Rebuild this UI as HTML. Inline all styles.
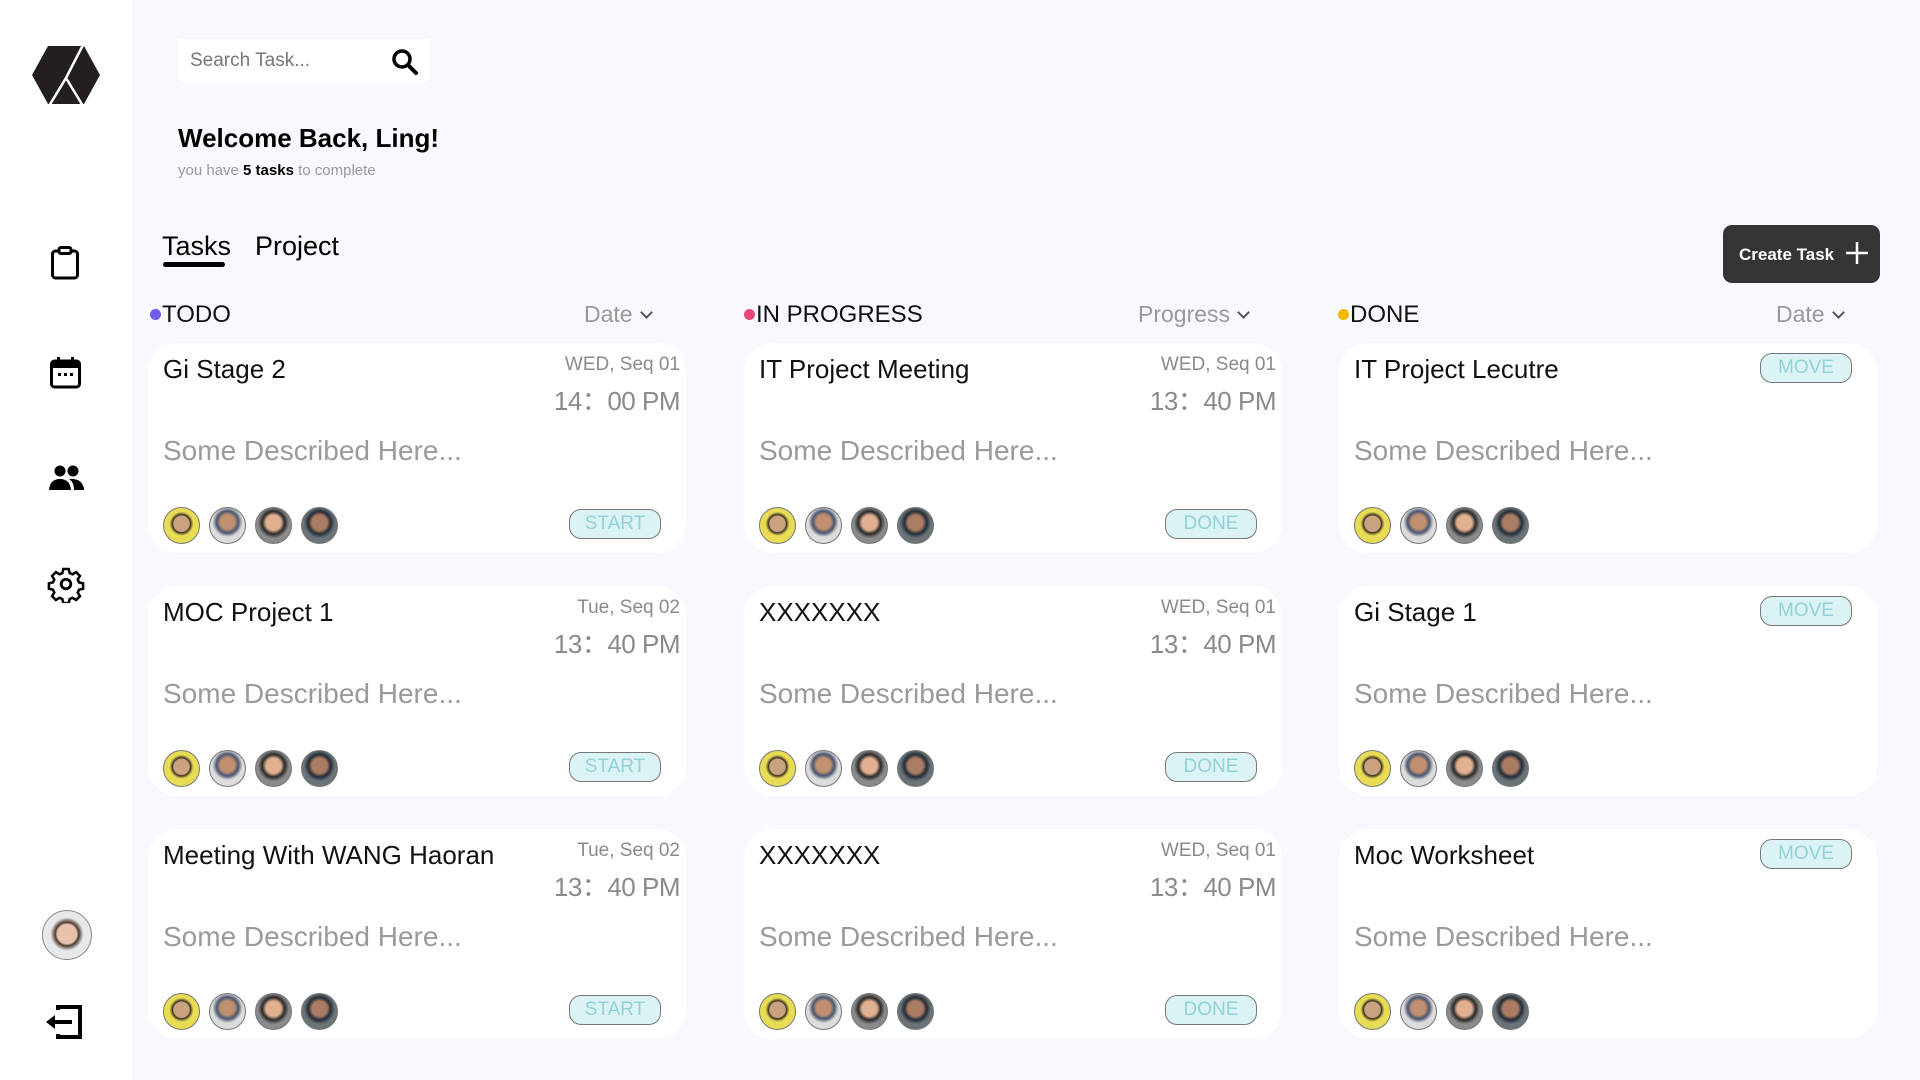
<!DOCTYPE html>
<html><head><meta charset="utf-8"><style>
*{margin:0;padding:0;box-sizing:border-box}
body{width:1920px;height:1080px;background:#f8f9fe;font-family:"Liberation Sans",sans-serif;position:relative;overflow:hidden}
.side{position:absolute;left:0;top:0;width:132px;height:1080px;background:#fff}
.a{position:absolute}
.card{position:absolute;width:538px;height:210px;background:#fff;border-radius:30px}
.t{position:absolute;left:15px;top:11px;font-size:26px;color:#111;white-space:nowrap}
.d{position:absolute;right:6px;top:11px;font-size:19px;color:#8a8a8a}
.tm{position:absolute;right:6px;top:38px;font-size:26px;color:#8a8a8a;letter-spacing:-0.5px}
.ds{position:absolute;left:15px;top:92px;font-size:28px;color:#9a9a9a}
.av{position:absolute;top:164px;width:37px;height:37px;border-radius:50%;border:1px solid #777}
.b{position:absolute;left:421px;width:92px;height:30px;border:1.5px solid #777;border-radius:12px;background:#dcf3f6;color:#8fd3d8;font-size:19px;text-align:center;line-height:28px}
.hd{position:absolute;top:301px;font-size:24px;color:#111}
.dot{display:inline-block;width:11px;height:11px;border-radius:50%;margin-right:1px;vertical-align:2px}
.sort{position:absolute;top:301px;font-size:23px;color:#999}
.sort:after{content:"";display:inline-block;width:7px;height:7px;border-right:2px solid #555;border-bottom:2px solid #555;transform:rotate(45deg);margin-left:9px;vertical-align:5px}
.a1{left:15px;background:radial-gradient(circle at 50% 45%,#c9a27f 0 30%,#3a3020 34%,#e8dc55 46%)}
.a2{left:61px;background:radial-gradient(circle at 50% 40%,#c09070 0 26%,#4a5670 40%,#dcdcdc 55%)}
.a3{left:107px;background:radial-gradient(circle at 50% 42%,#e0b090 0 28%,#2a2a2a 42%,#8a8a8a 58%)}
.a4{left:153px;background:radial-gradient(circle at 50% 42%,#a97c63 0 28%,#252d38 42%,#6a7478 58%)}
</style></head><body>
<div class="side">
<svg class="a" style="left:0;top:0" width="132" height="132"><polygon points="32,75 48,46 84,46 100,75 84,104 48,104" fill="#231f20"/><polyline points="83,45 66,78 49,106" fill="none" stroke="#fff" stroke-width="2.5"/><line x1="66" y1="78" x2="83" y2="106" stroke="#fff" stroke-width="2.5"/></svg>
<svg class="a" style="left:50px;top:246px" width="32" height="34"><rect x="2.5" y="5" width="25" height="27" rx="3" fill="none" stroke="#000" stroke-width="3"/><rect x="9" y="1.5" width="12" height="6" rx="2" fill="#fff" stroke="#000" stroke-width="3"/></svg>
<svg class="a" style="left:50px;top:357px" width="32" height="32"><rect x="1.5" y="4" width="28" height="26" rx="3" fill="none" stroke="#000" stroke-width="3"/><rect x="1.5" y="4" width="28" height="7" fill="#000"/><rect x="7" y="0" width="3" height="6" fill="#000"/><rect x="21" y="0" width="3" height="6" fill="#000"/><rect x="8" y="16" width="3" height="3"/><rect x="14" y="16" width="3" height="3"/><rect x="20" y="16" width="3" height="3"/></svg>
<svg class="a" style="left:49px;top:465px" width="36" height="26"><circle cx="11" cy="6" r="5.5"/><circle cx="24" cy="6" r="5.5"/><path d="M0 25 Q1 14 11 14 Q21 14 22 25Z"/><path d="M20 14 Q34 13 35 25 H25 Q25 17 20 14Z"/></svg>
<svg class="a" style="left:47px;top:565px" width="38" height="38" viewBox="0 0 24 24"><path fill="none" stroke="#000" stroke-width="1.6" d="M10.3 2.5h3.4l.6 2.6 1.8.8 2.3-1.4 2.4 2.4-1.4 2.3.8 1.8 2.6.6v3.4l-2.6.6-.8 1.8 1.4 2.3-2.4 2.4-2.3-1.4-1.8.8-.6 2.6h-3.4l-.6-2.6-1.8-.8-2.3 1.4-2.4-2.4 1.4-2.3-.8-1.8-2.6-.6v-3.4l2.6-.6.8-1.8-1.4-2.3 2.4-2.4 2.3 1.4 1.8-.8z"/><circle cx="12" cy="12" r="3" fill="none" stroke="#000" stroke-width="1.8"/></svg>
<div class="a" style="left:42px;top:910px;width:50px;height:50px;border-radius:50%;border:1px solid #888;background:radial-gradient(circle at 50% 48%,#e8c2ad 0 28%,#4a3a30 34%,#e8e8e8 48%)"></div>
<svg class="a" style="left:44px;top:1005px" width="40" height="34"><rect x="14" y="2" width="22" height="30" fill="none" stroke="#000" stroke-width="4"/><rect x="10" y="5" width="8" height="24" fill="#fff"/><rect x="10" y="15" width="18" height="4" fill="#000"/><polygon points="2,17 11,10 11,24" fill="#000"/></svg>
</div>

<div class="a" style="left:179px;top:39px;width:250px;height:43px;background:#fff"></div>
<div class="a" style="left:190px;top:50px;font-size:19px;color:#777">Search Task...</div>
<svg class="a" style="left:391px;top:48px" width="28" height="28"><circle cx="11" cy="11" r="8" fill="none" stroke="#000" stroke-width="3.5"/><line x1="17" y1="17" x2="25" y2="25" stroke="#000" stroke-width="4" stroke-linecap="round"/></svg>
<div class="a" style="left:178px;top:123px;font-size:26px;font-weight:bold;color:#000">Welcome Back, Ling!</div>
<div class="a" style="left:178px;top:162px;font-size:15px;color:#999">you have <b style="color:#000">5 tasks</b> to complete</div>
<div class="a" style="left:162px;top:231px;font-size:27px;color:#000">Tasks</div>
<div class="a" style="left:163px;top:262px;width:62px;height:5px;border-radius:3px;background:#000"></div>
<div class="a" style="left:255px;top:231px;font-size:27px;color:#000">Project</div>
<div class="a" style="left:1723px;top:225px;width:157px;height:58px;background:#353535;border-radius:9px"></div>
<div class="a" style="left:1739px;top:245px;font-size:17px;font-weight:bold;color:#fff">Create Task</div>
<svg class="a" style="left:1845px;top:241px" width="24" height="24"><path d="M12 1V23M1 12H23" stroke="#fff" stroke-width="2.5"/></svg>

<div class="hd" style="left:150px"><span class="dot" style="background:#6c5ce7"></span>TODO</div>
<div class="sort" style="left:584px">Date</div>
<div class="hd" style="left:744px"><span class="dot" style="background:#e84a75"></span>IN PROGRESS</div>
<div class="sort" style="left:1138px">Progress</div>
<div class="hd" style="left:1338px"><span class="dot" style="background:#f5b800"></span>DONE</div>
<div class="sort" style="left:1776px">Date</div>

<div class="card" style="left:148px;top:343px"><div class="t">Gi Stage 2</div><div class="d">WED, Seq 01</div><div class="tm">14：00 PM</div><div class="ds">Some Described Here...</div>
<div class="av a1"></div><div class="av a2"></div><div class="av a3"></div><div class="av a4"></div><div class="b" style="top:166px">START</div></div>
<div class="card" style="left:148px;top:586px"><div class="t">MOC Project 1</div><div class="d">Tue, Seq 02</div><div class="tm">13：40 PM</div><div class="ds">Some Described Here...</div>
<div class="av a1"></div><div class="av a2"></div><div class="av a3"></div><div class="av a4"></div><div class="b" style="top:166px">START</div></div>
<div class="card" style="left:148px;top:829px"><div class="t">Meeting With WANG Haoran</div><div class="d">Tue, Seq 02</div><div class="tm">13：40 PM</div><div class="ds">Some Described Here...</div>
<div class="av a1"></div><div class="av a2"></div><div class="av a3"></div><div class="av a4"></div><div class="b" style="top:166px">START</div></div>

<div class="card" style="left:744px;top:343px"><div class="t">IT Project Meeting</div><div class="d">WED, Seq 01</div><div class="tm">13：40 PM</div><div class="ds">Some Described Here...</div>
<div class="av a1"></div><div class="av a2"></div><div class="av a3"></div><div class="av a4"></div><div class="b" style="top:166px">DONE</div></div>
<div class="card" style="left:744px;top:586px"><div class="t">XXXXXXX</div><div class="d">WED, Seq 01</div><div class="tm">13：40 PM</div><div class="ds">Some Described Here...</div>
<div class="av a1"></div><div class="av a2"></div><div class="av a3"></div><div class="av a4"></div><div class="b" style="top:166px">DONE</div></div>
<div class="card" style="left:744px;top:829px"><div class="t">XXXXXXX</div><div class="d">WED, Seq 01</div><div class="tm">13：40 PM</div><div class="ds">Some Described Here...</div>
<div class="av a1"></div><div class="av a2"></div><div class="av a3"></div><div class="av a4"></div><div class="b" style="top:166px">DONE</div></div>

<div class="card" style="left:1339px;top:343px"><div class="t">IT Project Lecutre</div><div class="ds">Some Described Here...</div>
<div class="av a1"></div><div class="av a2"></div><div class="av a3"></div><div class="av a4"></div><div class="b" style="top:10px">MOVE</div></div>
<div class="card" style="left:1339px;top:586px"><div class="t">Gi Stage 1</div><div class="ds">Some Described Here...</div>
<div class="av a1"></div><div class="av a2"></div><div class="av a3"></div><div class="av a4"></div><div class="b" style="top:10px">MOVE</div></div>
<div class="card" style="left:1339px;top:829px"><div class="t">Moc Worksheet</div><div class="ds">Some Described Here...</div>
<div class="av a1"></div><div class="av a2"></div><div class="av a3"></div><div class="av a4"></div><div class="b" style="top:10px">MOVE</div></div>
</body></html>
